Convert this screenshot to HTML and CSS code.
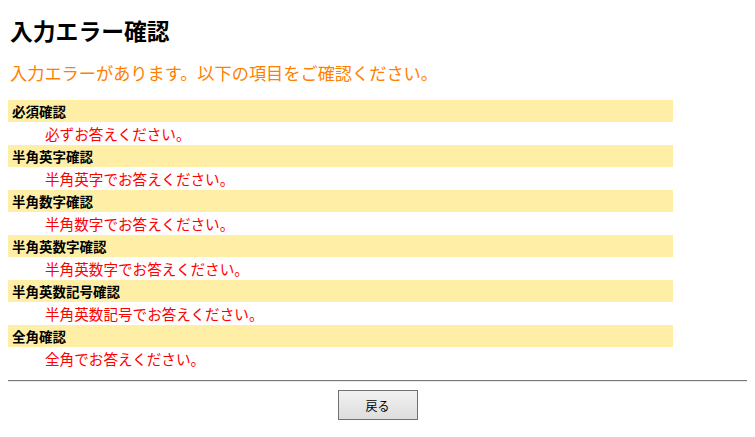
FILE: index.html
```html
<!DOCTYPE html>
<html lang="ja">
<head>
<meta charset="utf-8">
<title>入力エラー確認</title>
<link rel="stylesheet" href="styles.css">
</head>
<body>
<h1 class="title">入力エラー確認</h1>
<p class="lead">入力エラーがあります。以下の項目をご確認ください。</p>
<div class="errors">
  <div class="err-label">必須確認</div>
  <div class="err-msg">必ずお答えください。</div>
  <div class="err-label">半角英字確認</div>
  <div class="err-msg">半角英字でお答えください。</div>
  <div class="err-label">半角数字確認</div>
  <div class="err-msg">半角数字でお答えください。</div>
  <div class="err-label">半角英数字確認</div>
  <div class="err-msg">半角英数字でお答えください。</div>
  <div class="err-label">半角英数記号確認</div>
  <div class="err-msg">半角英数記号でお答えください。</div>
  <div class="err-label">全角確認</div>
  <div class="err-msg">全角でお答えください。</div>
</div>
<hr class="rule">
<div class="actions">
  <button class="back" type="button">戻る</button>
</div>
</body>
</html>
```
FILE: styles.css
```css
html, body {
  background: #ffffff;
}
body {
  margin: 8px;
  font-family: "Noto Sans CJK JP", "Noto Sans", sans-serif;
  color: #000000;
}
.title {
  margin: 10px 0 0 2px;
  font-size: 22.8px;
  line-height: 26px;
  font-weight: bold;
}
.lead {
  margin: 18px 0 0 2px;
  font-size: 17.2px;
  line-height: 22px;
  color: #ff7f00;
}
.errors {
  width: 90%;
  margin-top: 16px;
}
.err-label {
  height: 22px;
  line-height: 22px;
  padding-left: 4px;
  background: #ffefa6;
  font-size: 13.5px;
  font-weight: bold;
}
.err-msg {
  height: 23px;
  line-height: 24px;
  padding-left: 37px;
  font-size: 14.6px;
  color: #ff0000;
}
.rule {
  margin: 10px 0 0 0;
  height: 0;
  border: 0;
  border-top: 1px solid #7a7a7a;
  border-bottom: 1px solid #e6e6e6;
}
.actions {
  display: flex;
  justify-content: center;
  margin-top: 8px;
}
.back {
  width: 80px;
  height: 30px;
  border: 1px solid #707070;
  background: linear-gradient(#f2f2f2, #dddddd);
  font-family: "Noto Sans CJK JP", sans-serif;
  font-size: 12px;
  color: #000000;
  padding: 0;
}
```
